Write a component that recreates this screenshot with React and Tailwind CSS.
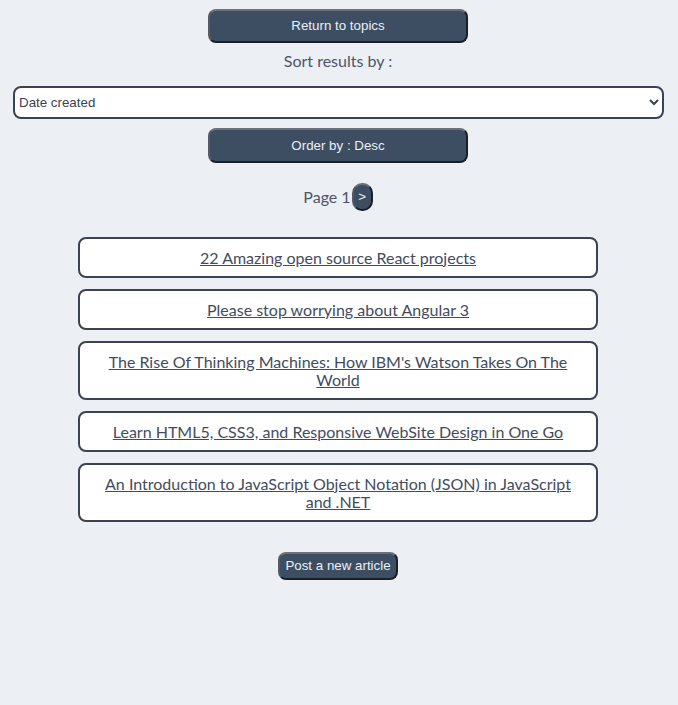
import { useState } from "react";

const articles = [
  "22 Amazing open source React projects",
  "Please stop worrying about Angular 3",
  "The Rise Of Thinking Machines: How IBM's Watson Takes On The World",
  "Learn HTML5, CSS3, and Responsive WebSite Design in One Go",
  "An Introduction to JavaScript Object Notation (JSON) in JavaScript and .NET",
];

const btn =
  "bg-[#3d4e63] text-[#eceff4] border-2 border-t-[#6b717a] border-l-[#555b64] border-b-[#1b1f25] border-r-[#1b1f25] font-['Liberation_Sans',Arial,sans-serif] text-[13.33px]";

export default function App() {
  const [sortBy, setSortBy] = useState("created_at");
  const [order, setOrder] = useState("desc");

  return (
    <div className="min-h-[705px] bg-[#eceff4] text-[#4c566a] font-['Lato',sans-serif] flex flex-col items-center pt-[9px] pr-[2px]">
      <button className={`${btn} w-[260px] h-[34px] rounded-lg`}>Return to topics</button>
      <p className="mt-[8px] text-[16px] leading-[20px]">Sort results by :</p>
      <div className="w-full pl-[13px] pr-[12px] mt-[15px]">
        <select
          value={sortBy}
          onChange={(e) => setSortBy(e.target.value)}
          className="w-full h-[33px] bg-white border-2 border-[#3b4252] rounded-lg pl-0 pr-[4px] text-[13.33px] text-[#3b4252] font-['Liberation_Sans',Arial,sans-serif]"
          style={{ appearance: "auto" }}
        >
          <option value="created_at">Date created</option>
          <option value="votes">Votes</option>
          <option value="comment_count">Comment count</option>
        </select>
      </div>
      <button
        className={`${btn} w-[260px] h-[35px] rounded-lg mt-[9px]`}
        onClick={() => setOrder(order === "desc" ? "asc" : "desc")}
      >
        Order by : {order === "desc" ? "Desc" : "Asc"}
      </button>
      <div className="flex items-center mt-[20px] text-[16px]">
        <span>Page 1</span>
        <button className={`${btn} w-[21px] h-[28px] rounded-[10px] ml-[1px] flex items-center justify-center`}>
          &gt;
        </button>
      </div>
      <ul className="w-[520px] flex flex-col gap-[11px] mt-[26px]">
        {articles.map((title) => (
          <li
            key={title}
            className="bg-white border-2 border-[#3b4252] rounded-lg px-[16px] py-[9.5px] text-center text-[16px] leading-[18px]"
          >
            <a href="#" className="underline text-[#434c5e]">
              {title}
            </a>
          </li>
        ))}
      </ul>
      <button className={`${btn} rounded-lg h-[28px] px-[5px] mt-[30px]`}>Post a new article</button>
    </div>
  );
}
